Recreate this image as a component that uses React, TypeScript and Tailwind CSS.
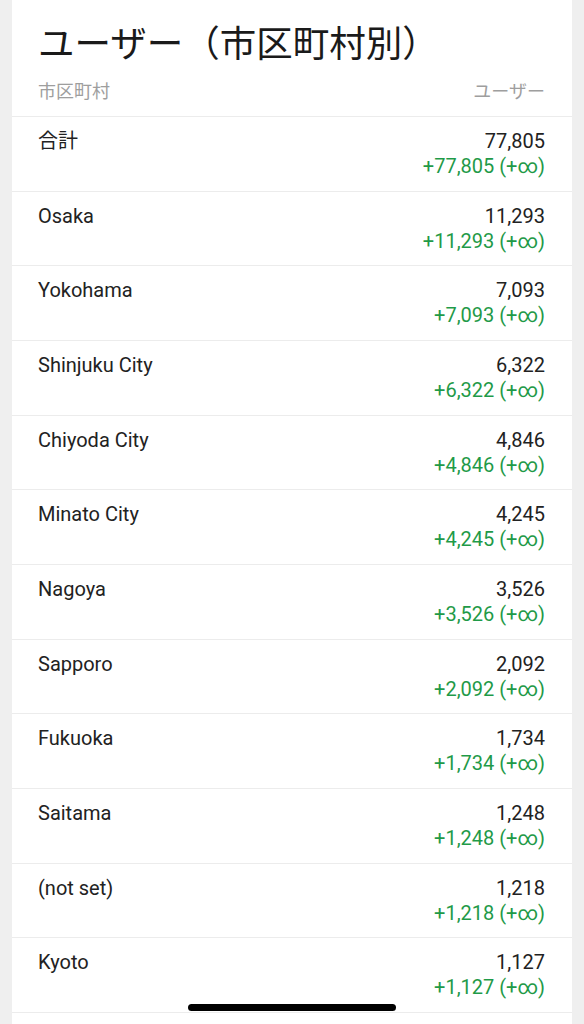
import React from "react";

const rows: [string, string][] = [
  ["合計", "77,805"],
  ["Osaka", "11,293"],
  ["Yokohama", "7,093"],
  ["Shinjuku City", "6,322"],
  ["Chiyoda City", "4,846"],
  ["Minato City", "4,245"],
  ["Nagoya", "3,526"],
  ["Sapporo", "2,092"],
  ["Fukuoka", "1,734"],
  ["Saitama", "1,248"],
  ["(not set)", "1,218"],
  ["Kyoto", "1,127"],
];

export default function App() {
  return (
    <div className="min-h-screen bg-[#efefef] px-3 font-['Roboto','Noto_Sans_CJK_JP',sans-serif]">
      <div className="bg-white w-[560px] mx-auto pb-[40px]">
        {/* title + column header */}
        <div className="pl-[26px] pr-[27px] border-b border-[#ececec]">
          <h1 className="pt-[18px] text-[36.5px] leading-[48px] text-[#1a1a1a] font-['Noto_Sans_CJK_JP',sans-serif]">
            ユーザー（市区町村別）
          </h1>
          <div className="flex justify-between pt-[12px] pb-[14px] text-[18px] leading-[24px] text-[#9e9e9e] font-['Noto_Sans_CJK_JP',sans-serif]">
            <span>市区町村</span>
            <span>ユーザー</span>
          </div>
        </div>

        {rows.map(([name, value]) => (
          <div
            key={name}
            className="h-[74.67px] box-border border-b border-[#ececec] pl-[26px] pr-[27px] pt-[12px] flex justify-between text-[20px] leading-[25px]"
          >
            <span className="text-[#222]">{name}</span>
            <div className="text-right">
              <div className="text-[#222]">{value}</div>
              <div className="text-[#1f9a48]">+{value} (+∞)</div>
            </div>
          </div>
        ))}
      </div>

      {/* home indicator */}
      <div className="fixed bottom-[13px] left-1/2 -translate-x-1/2 w-[208px] h-[7px] rounded-full bg-black" />
    </div>
  );
}
